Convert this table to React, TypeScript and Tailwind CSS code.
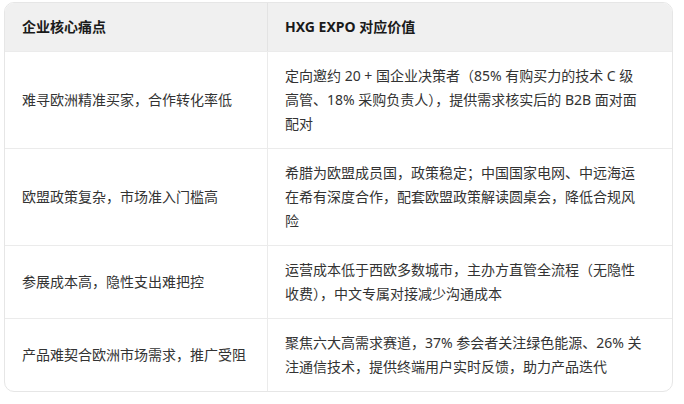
import React from 'react';

const rows: { pain: string; value: string }[] = [
  {
    pain: '难寻欧洲精准买家，合作转化率低',
    value: '定向邀约 20 + 国企业决策者（85% 有购买力的技术 C 级\n高管、18% 采购负责人），提供需求核实后的 B2B 面对面\n配对',
  },
  {
    pain: '欧盟政策复杂，市场准入门槛高',
    value: '希腊为欧盟成员国，政策稳定；中国国家电网、中远海运在希有深度合作，配套欧盟政策解读圆桌会，降低合规风险',
  },
  {
    pain: '参展成本高，隐性支出难把控',
    value: '运营成本低于西欧多数城市，主办方直管全流程（无隐性收费），中文专属对接减少沟通成本',
  },
  {
    pain: '产品难契合欧洲市场需求，推广受阻',
    value: '聚焦六大高需求赛道，37% 参会者关注绿色能源、26% 关注通信技术，提供终端用户实时反馈，助力产品迭代',
  },
];

export default function App() {
  return (
    <div className="w-[684px] h-[404px] bg-white pt-[2px] pl-[4px] font-['Segoe_UI','Noto_Sans','Noto_Sans_CJK_SC',sans-serif]">
      <div className="w-[669px] border border-[#e6e6e6] rounded-[10px] overflow-hidden">
        {/* header */}
        <div className="grid grid-cols-[263px_1fr] bg-[#f0f0f0] text-[14px] leading-6 font-bold text-[#1a1a1a]">
          <div className="px-[17px] py-3 border-r border-[#e3e3e3]">企业核心痛点</div>
          <div className="px-[17px] py-3">HXG EXPO 对应价值</div>
        </div>
        {rows.map((r) => (
          <div key={r.pain} className="grid grid-cols-[263px_1fr] border-t border-[#ebebeb] text-[14px] text-[#333]">
            <div className="px-[17px] py-3 leading-6 border-r border-[#ebebeb] flex items-center">{r.pain}</div>
            <div className="pl-[17px] pr-[24px] py-3 leading-6 whitespace-pre-line">{r.value}</div>
          </div>
        ))}
      </div>
    </div>
  );
}
